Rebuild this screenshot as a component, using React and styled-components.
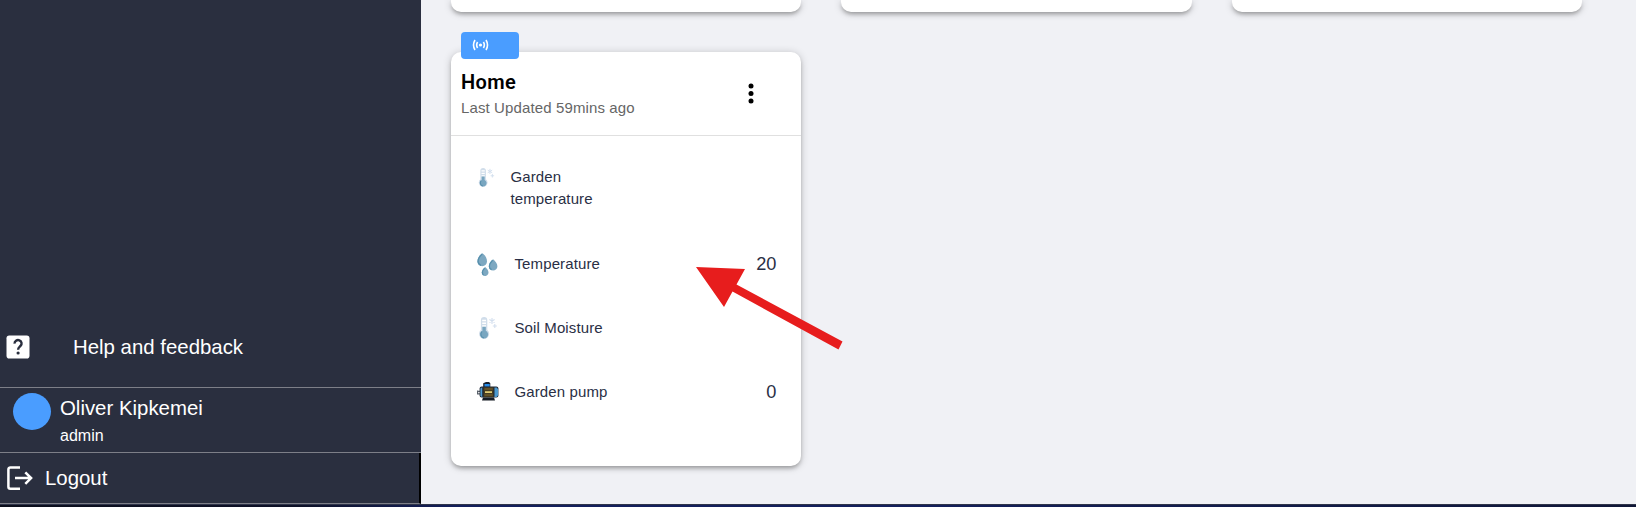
import React from "react";
import styled, { createGlobalStyle } from "styled-components";

const GlobalStyle = createGlobalStyle`
  * { box-sizing: border-box; }
  body {
    margin: 0;
    background: #f0f1f5;
    font-family: "Liberation Sans", Arial, sans-serif;
    overflow: hidden;
  }
`;

const Page = styled.div`
  height: 507px;
  display: flex;
  flex-direction: column;
  position: relative;
`;

const Body = styled.div`
  flex: 1;
  display: flex;
  min-height: 0;
`;

const BottomEdge = styled.div`
  height: 3px;
  border-top: 1px solid #30354a;
  background: linear-gradient(90deg, #0b0e1c 0, #0d1128 300px, #14205c 460px, #14205c 900px, #101737 1636px);
`;

const Sidebar = styled.aside`
  width: 421px;
  background: #2a2f3f;
  color: #fff;
  display: flex;
  flex-direction: column;
  justify-content: flex-end;
  font-size: 20.4px;
  line-height: 24px;
`;

const HelpRow = styled.div`
  display: flex;
  align-items: center;
  height: 80px;
  padding: 0 0 2px 6px;
  gap: 43px;
  border-bottom: 1px solid #7d7f88;
`;

const UserRow = styled.div`
  display: flex;
  height: 65px;
  padding: 5px 0 0 13px;
  gap: 9px;
  border-bottom: 1px solid #7d7f88;
`;

const Avatar = styled.div`
  width: 38px;
  height: 37px;
  border-radius: 50%;
  background: #4a9dff;
`;

const UserName = styled.div`
  padding-top: 3px;
`;

const UserRole = styled.div`
  font-size: 16px;
  line-height: 20px;
  padding-top: 6px;
`;

const LogoutRow = styled.div`
  display: flex;
  align-items: center;
  height: 51px;
  padding-left: 6px;
  gap: 11px;
  border-bottom: 1px solid #7d7f88;
  border-right: 2px solid #000;
`;

const Main = styled.main`
  flex: 1;
  min-width: 0;
  padding-left: 30px;
  overflow: hidden;
`;

const Grid = styled.div`
  display: grid;
  grid-template-columns: repeat(3, 350.4px);
  column-gap: 40.1px;
  row-gap: 40px;
`;

const Card = styled.section`
  background: #fff;
  border-radius: ${(p) => (p.$cut ? "0 0 10px 10px" : "10px")};
  height: ${(p) => (p.$cut ? 12 : 414)}px;
  box-shadow: 0 3px 4px -1px rgba(0, 0, 0, 0.28), 0 1px 8px 0 rgba(0, 0, 0, 0.2);
  position: relative;
`;

const Badge = styled.div`
  position: absolute;
  left: 10px;
  top: -20px;
  width: 58px;
  height: 27px;
  border-radius: 4px;
  background: #4a9dff;
  display: flex;
  align-items: center;
  padding: 0 0 1px 11px;
`;

const CardHeader = styled.header`
  height: 84px;
  border-bottom: 1px solid #e0e0e0;
  display: flex;
  justify-content: space-between;
  padding: 15px 45px 0 10px;
`;

const Title = styled.h2`
  margin: 0;
  font: 600 20px/30px Roboto, sans-serif;
  letter-spacing: 0.35px;
  color: #000;
`;

const Updated = styled.div`
  font: 400 15px/22px "Liberation Sans", Arial, sans-serif;
  letter-spacing: 0.12px;
  color: #666;
`;

const MenuButton = styled.button`
  border: 0;
  background: none;
  padding: 0;
  height: 24px;
  margin-top: 16px;
`;

const Readings = styled.div`
  padding: 20px 25px 0 25px;
`;

const Reading = styled.div`
  display: flex;
  align-items: ${(p) => (p.$tall ? "flex-start" : "center")};
  height: ${(p) => (p.$tall ? 76 : 64)}px;
  padding-top: ${(p) => (p.$tall ? 10 : 0)}px;
`;

const ReadingIcon = styled.div`
  width: ${(p) => (p.$small ? 34.5 : 38.5)}px;
  padding-left: 0.8px;
  height: 22px;
  flex: none;
  display: flex;
  align-items: center;
`;

const ReadingName = styled.div`
  width: ${(p) => (p.$narrow ? 100 : 160)}px;
  font-size: 15px;
  line-height: 22px;
  letter-spacing: 0.12px;
  color: #2a2f45;
`;

const ReadingValue = styled.div`
  margin-left: auto;
  font-size: 18.2px;
  color: #2a2f45;
`;

const Arrow = styled.svg`
  position: absolute;
  left: 690px;
  top: 260px;
  display: block;
`;

const HelpIcon = () => (
  <svg width="24" height="24" viewBox="0 0 24 24">
    <rect x="0.5" y="0.4" width="23" height="23.2" rx="2.8" fill="#fff" />
    <path d="M8.6 8.7a3.5 3.4 0 1 1 5.8 2.3c-1.4 1.3-2.3 1.7-2.3 3.7" fill="none" stroke="#2a2f3f" strokeWidth="2.4" />
    <circle cx="12.1" cy="18" r="1.6" fill="#2a2f3f" />
  </svg>
);

const LogoutIcon = () => (
  <svg width="28" height="26" viewBox="0 0 28 26" fill="none" stroke="#fff" strokeWidth="2.5">
    <path d="M14 2.4H4.4a2 2 0 0 0-2 2v17.4a2 2 0 0 0 2 2H14M9 13.1h16M19.3 7.3l5.8 5.8-5.8 5.8" />
  </svg>
);

const SignalIcon = () => (
  <svg width="17" height="12" viewBox="0 0 16 12" fill="none" stroke="#fff" strokeWidth="1.6">
    <circle cx="8" cy="6" r="1.6" fill="#fff" stroke="none" />
    <path d="M5.1 3Q3.2 6 5.1 9M10.9 3Q12.8 6 10.9 9M2.5 1Q-.5 6 2.5 11M13.5 1Q16.5 6 13.5 11" />
  </svg>
);

const DotsIcon = () => (
  <svg width="10" height="22" viewBox="0 0 10 22">
    <circle cx="5" cy="3" r="2.5" />
    <circle cx="5" cy="10.6" r="2.5" />
    <circle cx="5" cy="18.1" r="2.5" />
  </svg>
);

const ThermometerIcon = ({ size }) => (
  <svg width={size} height={size} viewBox="0 0 20 22">
    <path d="M2.9 3a3.2 3 0 0 1 6.4 0v9.9a5.1 5 0 1 1-6.4 0z" fill="#d0ddea" />
    <path d="M4.2 3.4h3.8M4.2 6.2h3.8M4.2 9h3.8" stroke="#fff" strokeWidth="1.5" />
    <path d="M4.4 9.8h3.4v4a4 4 0 1 1-3.4 0z" fill="#79a6c0" />
    <path d="M3.8 14.7a3.8 3.8 0 0 0 2.1 6.2" fill="none" stroke="#5a91ae" strokeWidth="1.2" />
    <path d="M14 1v6M11.4 2.5l5.2 3M11.4 5.5l5.2-3M16.8 7v4M14.8 9h4" stroke="#d3dfee" strokeWidth="1.1" />
  </svg>
);

const DropsIcon = () => (
  <svg width="22" height="23" viewBox="0 0 22 23">
    <g fill="#7da8c1">
      <path d="M5.4.2C8 2 10 5.2 10 8.3a4.8 4.9 0 0 1-9.6 0C.4 5.2 2.6 2 5.4.2z" />
      <path d="M16.1 6.2c2.2 1.6 4.3 4.5 4.3 7.1a4.3 4.3 0 0 1-8.6 0c0-2.6 2-5.5 4.3-7.1z" />
      <path d="M8.1 14c1.8 1.4 3.4 3.6 3.4 5.6 0 4.6-6.8 4.6-6.8 0 0-2 1.6-4.2 3.4-5.6z" />
    </g>
    <path d="M5.2 1C2.7 3.3 1.1 6 1.1 8.3c0 2 1.1 3.4 2.9 4M15.6 7.2c-1.8 1.8-3.2 3.9-3.2 6 0 1.6.8 2.9 2.2 3.5M7.7 15.1c-1.4 1.4-2.3 2.9-2.3 4.5 0 1.2.4 2 1.2 2.5" fill="none" stroke="#5790ad" strokeWidth="1.3" />
  </svg>
);

const PumpIcon = () => (
  <svg width="22" height="20" viewBox="0 0 22 20">
    <path d="M0 9.3h3M0 11.8h3M.6 8.6v4" stroke="#59616b" strokeWidth="1.2" />
    <path d="M6.2 1.2 9 0h3l1.3 1.2V5H6.2z" fill="#18212e" />
    <rect x="7.5" y="2" width="5.2" height="2.8" fill="#258be8" />
    <rect x="2.6" y="4.6" width="18.8" height="11" rx="2" fill="#202936" />
    <path d="M3.4 6.5 5.2 5.3v9.9l-1.8-1.4zM17.5 5.4h2.2l1.4 1.8v6l-1.4 1.8h-2.2z" fill="#4c99cf" />
    <rect x="6.6" y="5.3" width="9.8" height="9.8" fill="#463c22" />
    <path d="M7.5 7h8.2M7.5 13h8.2" stroke="#80672f" strokeWidth="1" />
    <rect x="8" y="9.3" width="7" height="1.6" fill="#f2dc7d" />
    <path d="M6 15.5h11l1 2.9H5z" fill="#171c25" />
  </svg>
);

const readings = [
  { name: "Garden temperature", icon: <ThermometerIcon size={19} />, tall: true },
  { name: "Temperature", icon: <DropsIcon />, value: "20" },
  { name: "Soil Moisture", icon: <ThermometerIcon size={22} /> },
  { name: "Garden pump", icon: <PumpIcon />, value: "0" },
];

export default function App() {
  return (
    <Page>
      <GlobalStyle />
      <Body>
        <Sidebar>
          <HelpRow>
            <HelpIcon />
            <span>Help and feedback</span>
          </HelpRow>
          <UserRow>
            <Avatar />
            <div>
              <UserName>Oliver Kipkemei</UserName>
              <UserRole>admin</UserRole>
            </div>
          </UserRow>
          <LogoutRow>
            <LogoutIcon />
            <span>Logout</span>
          </LogoutRow>
        </Sidebar>
        <Main>
          <Grid>
            <Card $cut />
            <Card $cut />
            <Card $cut />
            <Card>
              <Badge>
                <SignalIcon />
              </Badge>
              <CardHeader>
                <div>
                  <Title>Home</Title>
                  <Updated>Last Updated 59mins ago</Updated>
                </div>
                <MenuButton aria-label="Menu">
                  <DotsIcon />
                </MenuButton>
              </CardHeader>
              <Readings>
                {readings.map((r) => (
                  <Reading key={r.name} $tall={r.tall}>
                    <ReadingIcon $small={r.tall}>{r.icon}</ReadingIcon>
                    <ReadingName $narrow={r.tall}>{r.name}</ReadingName>
                    {r.value && <ReadingValue>{r.value}</ReadingValue>}
                  </Reading>
                ))}
              </Readings>
            </Card>
          </Grid>
        </Main>
      </Body>
      <BottomEdge />
      <Arrow width="160" height="100" viewBox="690 260 160 100">
        <path d="M696 267 745 269 736.5 284.5 842.5 341.5 838.5 349.5 732.5 291.5 724 307z" fill="#e71d1d" />
      </Arrow>
    </Page>
  );
}
